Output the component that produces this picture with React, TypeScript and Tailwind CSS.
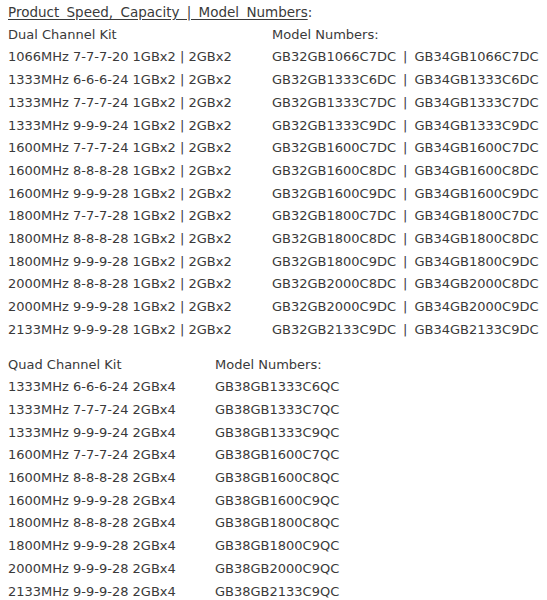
const dual = [
  ['1066MHz 7-7-7-20 1GBx2 | 2GBx2', 'GB32GB1066C7DC', 'GB34GB1066C7DC'],
  ['1333MHz 6-6-6-24 1GBx2 | 2GBx2', 'GB32GB1333C6DC', 'GB34GB1333C6DC'],
  ['1333MHz 7-7-7-24 1GBx2 | 2GBx2', 'GB32GB1333C7DC', 'GB34GB1333C7DC'],
  ['1333MHz 9-9-9-24 1GBx2 | 2GBx2', 'GB32GB1333C9DC', 'GB34GB1333C9DC'],
  ['1600MHz 7-7-7-24 1GBx2 | 2GBx2', 'GB32GB1600C7DC', 'GB34GB1600C7DC'],
  ['1600MHz 8-8-8-28 1GBx2 | 2GBx2', 'GB32GB1600C8DC', 'GB34GB1600C8DC'],
  ['1600MHz 9-9-9-28 1GBx2 | 2GBx2', 'GB32GB1600C9DC', 'GB34GB1600C9DC'],
  ['1800MHz 7-7-7-28 1GBx2 | 2GBx2', 'GB32GB1800C7DC', 'GB34GB1800C7DC'],
  ['1800MHz 8-8-8-28 1GBx2 | 2GBx2', 'GB32GB1800C8DC', 'GB34GB1800C8DC'],
  ['1800MHz 9-9-9-28 1GBx2 | 2GBx2', 'GB32GB1800C9DC', 'GB34GB1800C9DC'],
  ['2000MHz 8-8-8-28 1GBx2 | 2GBx2', 'GB32GB2000C8DC', 'GB34GB2000C8DC'],
  ['2000MHz 9-9-9-28 1GBx2 | 2GBx2', 'GB32GB2000C9DC', 'GB34GB2000C9DC'],
  ['2133MHz 9-9-9-28 1GBx2 | 2GBx2', 'GB32GB2133C9DC', 'GB34GB2133C9DC'],
];

const quad = [
  ['1333MHz 6-6-6-24 2GBx4', 'GB38GB1333C6QC'],
  ['1333MHz 7-7-7-24 2GBx4', 'GB38GB1333C7QC'],
  ['1333MHz 9-9-9-24 2GBx4', 'GB38GB1333C9QC'],
  ['1600MHz 7-7-7-24 2GBx4', 'GB38GB1600C7QC'],
  ['1600MHz 8-8-8-28 2GBx4', 'GB38GB1600C8QC'],
  ['1600MHz 9-9-9-28 2GBx4', 'GB38GB1600C9QC'],
  ['1800MHz 8-8-8-28 2GBx4', 'GB38GB1800C8QC'],
  ['1800MHz 9-9-9-28 2GBx4', 'GB38GB1800C9QC'],
  ['2000MHz 9-9-9-28 2GBx4', 'GB38GB2000C9QC'],
  ['2133MHz 9-9-9-28 2GBx4', 'GB38GB2133C9QC'],
];

export default function App() {
  return (
    <div className="w-[547px] h-[600px] overflow-hidden bg-white px-2 pt-px text-[13px] leading-[22.7px] text-[#3a3a3a] font-['DejaVu_Sans',sans-serif] whitespace-nowrap">
      <div className="text-[13.5px] [word-spacing:3px]">
        <span className="underline underline-offset-2">Product Speed, Capacity | Model Numbers</span>:
      </div>

      {/* Dual channel */}
      <div className="grid grid-cols-[264px_1fr]">
        <div>Dual Channel Kit</div>
        <div>Model Numbers:</div>
        {dual.map(([spec, a, b]) => (
          <>
            <div key={spec}>{spec}</div>
            <div key={a}>
              {a}
              <span className="mx-[7px]">|</span>
              {b}
            </div>
          </>
        ))}
      </div>

      {/* Quad channel */}
      <div className="grid grid-cols-[207px_1fr] mt-[12px]">
        <div>Quad Channel Kit</div>
        <div>Model Numbers:</div>
        {quad.map(([spec, model]) => (
          <>
            <div key={spec}>{spec}</div>
            <div key={model}>{model}</div>
          </>
        ))}
      </div>
    </div>
  );
}
